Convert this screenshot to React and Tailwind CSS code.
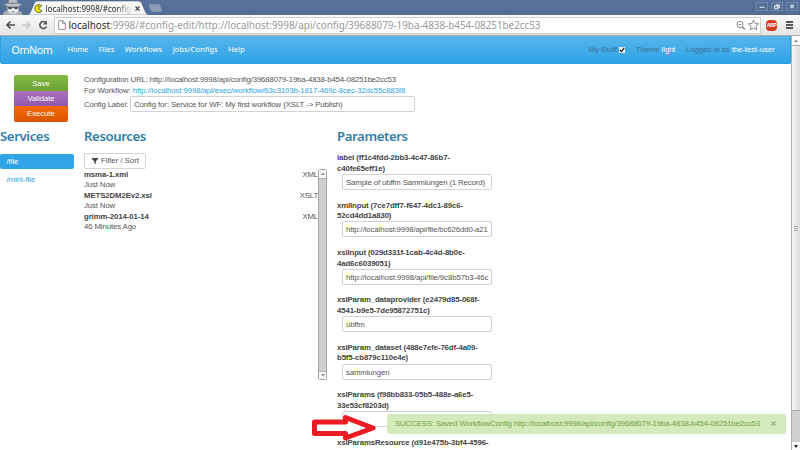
import React from 'react';

const UI = "font-['Liberation_Sans',Arial,sans-serif]";
const HEAD = "font-['Noto_Sans','Open_Sans',sans-serif]";

const params = [
  ['label (ff1c4fdd-2bb3-4c47-86b7-', 'c40fe65eff1e)', 'Sample of ubffm Sammlungen (1 Record)', 'tracking-[-0.13px]'],
  ['xmlInput (7ce7dff7-f647-4dc1-89c6-', '52cd4dd1a830)', 'http://localhost:9998/api/file/bc626dd0-a21', 'tracking-[-0.11px]'],
  ['xslInput (029d331f-1cab-4c4d-8b0e-', '4ad6c6039051)', 'http://localhost:9998/api/file/9c8b57b3-46c', 'tracking-[-0.09px]'],
  ['xslParam_dataprovider (e2479d85-068f-', '4541-b9e5-7de95872751c)', 'ubffm', 'tracking-[-0.15px]'],
  ['xslParam_dataset (488e7efe-76df-4a09-', 'b5f5-cb879c110e4e)', 'sammlungen', 'tracking-[-0.13px]'],
  ['xslParams (f98bb833-05b5-488e-a6e5-', '33e53cf8203d)', '', ''],
  ['xslParamsResource (d91e475b-3bf4-4596-', '', null, ''],
];

const resources = [
  ['msma-1.xml', 'XML', 'Just Now'],
  ['METS2DM2Ev2.xsl', 'XSLT', 'Just Now'],
  ['grimm-2014-01-14', 'XML', '46 Minutes Ago'],
];

function Incognito() {
  return (
    <svg className="ml-[3px] h-[15px] w-5 shrink-0" viewBox="0 0 20 15">
      <path d="M0 15c0-3 2-4.500 5-4.500h9c4 0 5 2 5.500 4.500z" fill="#a9adb4" />
      <path d="M4.500 4h11v5c0 2-2 5-5.500 5s-5.500-3-5.500-5z" fill="#eceef0" />
      <path d="M5.500 3.500L6 0h8l.5 3.500c3 .2 4 .8 4 1.300 0 .7-4 1.200-8.500 1.200S1.500 5.500 1.500 4.800c0-.5 1-1.100 4-1.300z" fill="#b9bdc2" />
      <path d="M6 2.800h8v1H6z" fill="#777d85" />
      <path d="M4.500 6.400h11l-.8 2.300c-2 1-3.600.6-4-.9H9.300c-.4 1.500-2 1.900-4 .9z" fill="#4b4f55" />
      <path d="M8 11.500h4v.9H8z" fill="#666b72" />
    </svg>
  );
}

function TitleBar() {
  return (
    <div className="flex h-[15px] items-end bg-gradient-to-b from-[#58739b] to-[#526c92]">
      <Incognito />
      <div className="relative ml-1 h-[15px] w-[122px]">
        <svg className="absolute inset-0 h-[15px] w-[122px]" viewBox="0 0 122 15">
          <path d="M0 15c2-.5 3-1.500 4-4l3-7c.8-2 1.500-3 4-3h100c2 0 3 .7 4 3l3 7c1 2.500 2 3.500 4 4z" fill="#f8f8f8" stroke="#3f567a" strokeWidth=".5" />
        </svg>
        <div className="relative flex h-[15px] items-center pl-[7px] pt-[2px]">
          <svg className="h-[9px] w-[9px] shrink-0" viewBox="0 0 9 9">
            <path d="M7.800 1.800A4 4 0 1 0 8 7L4.500 4.500z" fill="#f2e600" stroke="#3e3b10" strokeWidth=".7" />
            <circle cx="4.600" cy="2.300" r=".6" fill="#222" />
          </svg>
          <div className={`${HEAD} ml-[2.500px] w-[86px] whitespace-nowrap bg-gradient-to-r from-[#222] from-80% to-[#eee] bg-clip-text text-[8px] leading-[13px] text-transparent`}>localhost:9998/#config</div>
          <svg className="ml-[3px] h-[5px] w-[5px]" viewBox="0 0 5 5"><path d="M.5.5l4 4m0-4l-4 4" stroke="#444" strokeWidth="1.100" /></svg>
        </div>
      </div>
      <svg className="h-[15px] w-4" viewBox="0 0 16 15"><path d="M0 4h9c1.500 0 2 .5 2.500 2l1.500 4.500c.4 1.200 0 1.500-1 1.500H4c-1.500 0-2-.5-2.500-2L-.5 5.500C-.8 4.500-.5 4 0 4z" fill="#8b9cb7" stroke="#667ea3" strokeWidth=".6" /></svg>
      <div className="ml-auto flex h-[15px] items-start gap-[3px] pr-[2px] pt-[2px]">
        {['M3 5.500h6', 'M3 4h4v3.500H3zM5 4V2.500h4V6H7', 'M4 2l4.500 4.500m0-4.500L4 6.500'].map((d) => (
          <svg key={d} className="h-[9px] w-3 border border-[#7088ac]" viewBox="0 0 12 9"><path d={d} fill="none" stroke="#e9eef5" strokeWidth="1.300" /></svg>
        ))}
      </div>
    </div>
  );
}

function Toolbar() {
  return (
    <div className="flex h-[21px] items-center border-b border-[#a9a9a9] bg-gradient-to-b from-[#fafafa] to-[#e4e4e4]">
      <svg className="ml-1 h-4 w-[49px] shrink-0" viewBox="0 0 49 16" fill="none">
        <path d="M11 8H3m3.500-3.500L3 8l3.500 3.500" stroke="#505050" strokeWidth="1.700" />
        <path d="M18 8h8m-3.500-3.500L26 8l-3.500 3.500" stroke="#cacaca" strokeWidth="1.500" />
        <path d="M42 5.700A3.500 3.500 0 1 0 42.500 9.500" stroke="#505050" strokeWidth="1.600" />
        <path d="M43 3.500v4h-4z" fill="#505050" />
      </svg>
      <div className="ml-px flex h-[17px] w-[707px] items-center border border-[#cfcfcf] bg-white">
        <svg className="ml-[2.500px] h-[10px] w-2 shrink-0" viewBox="0 0 8 10"><path d="M.7.700h4L7.300 3.300v6H.7zM4.700.700v2.600h2.600" fill="#fff" stroke="#909090" /></svg>
        <div className={`${HEAD} ml-[3px] whitespace-nowrap text-[9.850px] leading-4 text-[#999]`}>
          <span className="text-[#222]">localhost</span>:9998/#config-edit/http://localhost:9998/api/config/39688079-19ba-4838-b454-08251be2cc53
        </div>
        <svg className="ml-auto h-3 w-6 shrink-0" viewBox="0 0 24 12" fill="none" stroke="#888">
          <circle cx="4" cy="5.500" r="3.100" /><path d="M6.300 7.800l2.700 2.700" strokeWidth="1.500" /><path d="M2.500 5.500h3" />
          <path d="M17.500 1.200l1.500 3.300 3.600.3-2.700 2.400.8 3.600-3.200-1.900-3.200 1.900.8-3.600-2.700-2.400 3.600-.3z" />
        </svg>
      </div>
      <div className="ml-[5px] flex h-[11px] w-[11px] items-center justify-center rounded-[4px] bg-[#d33b20] font-['Liberation_Sans',sans-serif] text-[5px] font-bold leading-none tracking-[-0.3px] text-white">ABP</div>
      <div className="ml-[9px] flex w-[7px] flex-col gap-[1px]">
        <i className="h-[2px] bg-[#555]" /><i className="h-[2px] bg-[#555]" /><i className="h-[2px] bg-[#555]" />
      </div>
    </div>
  );
}

function Navbar() {
  return (
    <div className="flex h-7 w-[791px] shrink-0 items-center whitespace-nowrap rounded-b-[2px] border border-t-0 border-[#2b9fe3] bg-gradient-to-b from-[#54b4eb] to-[#2fa4e7] pt-px text-[7.700px] leading-none text-white">
      <div className={`${HEAD} ml-[10.500px] w-[56px] text-[10.700px] tracking-[-0.4px]`}>OmNom</div>
      <div className={`${HEAD} flex gap-[10.600px] text-[7.600px]`}>
        <span className="tracking-[-0.25px]">Home</span><span className="tracking-[-0.05px]">Files</span><span>Workflows</span><span>Jobs/Configs</span><span>Help</span>
      </div>
      <div className={`${UI} ml-auto flex items-center pr-[15.500px] text-[#3a7197]`}>
        <span className="tracking-[0.01px]">My Stuff</span>
        <span className="ml-[2px] flex h-[6px] w-[6px] items-center justify-center bg-[#eee]">
          <svg className="h-[6px] w-[6px]" viewBox="0 0 6 6"><path d="M1 3l1.500 1.500L5.200.800" fill="none" stroke="#222" strokeWidth="1.200" /></svg>
        </span>
        <span className="ml-[11px] tracking-[-0.05px]">Theme <span className="text-white">light</span></span>
        <span className="ml-[10.500px] tracking-[-0.03px]">Logged in as <span className="text-white">the-test-user</span></span>
      </div>
    </div>
  );
}

const INPUT = 'overflow-hidden whitespace-nowrap rounded-[2px] border border-[#d2d2d2] bg-white pl-[3px] leading-[15px]';

function Header() {
  return (
    <div className="flex h-[61px] pl-[14px] pt-[11px]">
      <div className="flex h-[47px] w-[54px] shrink-0 flex-col overflow-hidden rounded-[2px] text-center text-[7.700px] leading-[16px] text-white">
        <div className="h-[15.500px] bg-gradient-to-b from-[#81b941] to-[#6fa336] leading-[17px]">Save</div>
        <div className="h-[15.500px] bg-gradient-to-b from-[#a973bf] to-[#9259ab]">Validate</div>
        <div className="h-4 bg-gradient-to-b from-[#f66900] to-[#dc5500]">Execute</div>
      </div>
      <div className="ml-4 whitespace-nowrap">
        <div className="h-[11px] tracking-[-0.14px]">Configuration URL: http://localhost:9998/api/config/39688079-19ba-4838-b454-08251be2cc53</div>
        <div className="h-[10px] tracking-[-0.1px]">For Workflow: <span className="text-[#2fa4e7]">http://localhost:9998/api/exec/workflow/63c3103b-1817-469c-8cec-32dc55c883f8</span></div>
        <div className="flex items-center">
          <span className="w-[46px] pt-[2px] tracking-[-0.15px]">Config Label:</span>
          <div className={`${INPUT} h-[15.500px] w-[285px] tracking-[-0.1px]`}>Config for: Service for WF: My first workflow (XSLT -&gt; Publish)</div>
        </div>
      </div>
    </div>
  );
}

function Heading({ children }) {
  return <h2 className={`${HEAD} h-[29px] text-[13.200px] font-semibold leading-[22px] tracking-[-0.4px] text-[#317eac]`}>{children}</h2>;
}

function ListScrollbar() {
  return (
    <div className="flex h-[211px] w-[9px] shrink-0 flex-col rounded-[2px] border border-[#a5a5a5] bg-[#d0d0d0]">
      <div className="flex h-2 items-center justify-center bg-[#fafafa]"><svg className="h-[3px] w-1" viewBox="0 0 4 3"><path d="M0 3l2-2.500L4 3z" fill="#888" /></svg></div>
      <div className="flex-1 border-y border-[#b0b0b0]" />
      <div className="flex h-[7px] items-center justify-center bg-[#fafafa]"><svg className="h-[3px] w-1" viewBox="0 0 4 3"><path d="M0 0l2 2.500L4 0z" fill="#888" /></svg></div>
    </div>
  );
}

function Columns() {
  return (
    <div className="flex">
      <div className="w-[84px] shrink-0">
        <Heading>Services</Heading>
        <div className="h-[15px] w-[74px] rounded-[2px] bg-[#2fa4e7] pl-[6.500px] leading-[16px] tracking-[-0.05px] text-white">/file</div>
        <div className="pl-[6.500px] pt-[4px] leading-[13px] tracking-[-0.1px] text-[#2fa4e7]">/mint-file</div>
      </div>
      <div className="w-[253px] shrink-0">
        <Heading>Resources</Heading>
        <div className="-mt-[1px] flex h-[15.500px] w-[62px] items-center rounded-[2px] border border-[#d5d5d5] pl-[7px] pt-px tracking-[-0.02px]">
          <svg className="mr-[3px] h-[6px] w-[6px]" viewBox="0 0 6 6"><path d="M0 0h6v1L3.800 3.200V6L2.200 5V3.200L0 1z" fill="#444" /></svg>
          Filter / Sort
        </div>
        <div className="flex">
          <div className="w-[234px] pt-[1.200px]">
            {resources.map(([name, kind, time]) => (
              <div key={name} className="h-[21.100px] leading-[10.500px]">
                <div className="flex justify-between"><b className="tracking-[-0.1px] text-[#444]">{name}</b><span className="tracking-[-0.15px]">{kind}</span></div>
                <div className="tracking-[-0.12px]">{time}</div>
              </div>
            ))}
          </div>
          <ListScrollbar />
        </div>
      </div>
      <div className="w-[155px] shrink-0">
        <Heading>Parameters</Heading>
        <div className="-mt-[0.700px]">
          {params.map(([a, b, value, track]) => (
            <div key={a} className="h-[47.400px] whitespace-nowrap">
              <div className="h-[21px] font-bold leading-[10.500px] tracking-[-0.12px] text-[#444]">{a}<br />{b}</div>
              {value !== null && <div className={`${INPUT} ${track} -mt-[0.300px] ml-[5px] h-4 w-[150px]`}>{value}</div>}
            </div>
          ))}
        </div>
      </div>
    </div>
  );
}

function PageScrollbar() {
  return (
    <div className="flex w-[9px] shrink-0 flex-col border-l border-[#b0b0b0] bg-[#d0d0d0]">
      <div className="flex h-[9px] items-center justify-center bg-[#fafafa]"><svg className="h-[3px] w-1" viewBox="0 0 4 3"><path d="M0 3l2-2.500L4 3z" fill="#888" /></svg></div>
      <div className="flex h-[366px] flex-col items-center justify-center gap-px border-y border-[#aaa] bg-gradient-to-r from-[#f4f4f4] to-[#dedede]">
        <i className="h-px w-1 bg-[#aaa]" /><i className="h-px w-1 bg-[#aaa]" /><i className="h-px w-1 bg-[#aaa]" />
      </div>
      <div className="flex-1" />
      <div className="flex h-2 items-center justify-center bg-[#fafafa]"><svg className="h-[3px] w-1" viewBox="0 0 4 3"><path d="M0 0l2 3 2-3z" fill="#222" /></svg></div>
    </div>
  );
}

export default function App() {
  return (
    <div className={`${UI} relative flex h-[450px] w-[800px] flex-col overflow-hidden bg-white text-[7.800px] leading-[10.500px] text-[#555]`}>
      <TitleBar />
      <Toolbar />
      <div className="flex min-h-0 flex-1">
        <div className="w-[791px] overflow-hidden">
          <Navbar />
          <Header />
          <Columns />
        </div>
        <PageScrollbar />
      </div>
      <div className="absolute left-[387px] top-[414px] flex h-5 w-[399px] items-center whitespace-nowrap rounded-[2px] bg-[#d4eabd] pl-2 pt-px tracking-[-0.14px] text-[#739f45]">
        SUCCESS: Saved WorkflowConfig http://localhost:9998/api/config/39688079-19ba-4838-b454-08251be2cc53
        <svg className="mb-[3px] ml-auto mr-[10px] h-[5px] w-[5px]" viewBox="0 0 5 5"><path d="M.5.5l4 4m0-4l-4 4" stroke="#98a98a" strokeWidth="1.200" /></svg>
      </div>
      <svg className="absolute left-[310px] top-[412px] h-8 w-[68px]" viewBox="0 0 68 32">
        <path d="M4.500 10h31V5.500L63 16 35.500 26v-4.500h-31z" fill="#fff" stroke="#ed1c24" strokeWidth="5" strokeLinejoin="round" />
      </svg>
    </div>
  );
}
